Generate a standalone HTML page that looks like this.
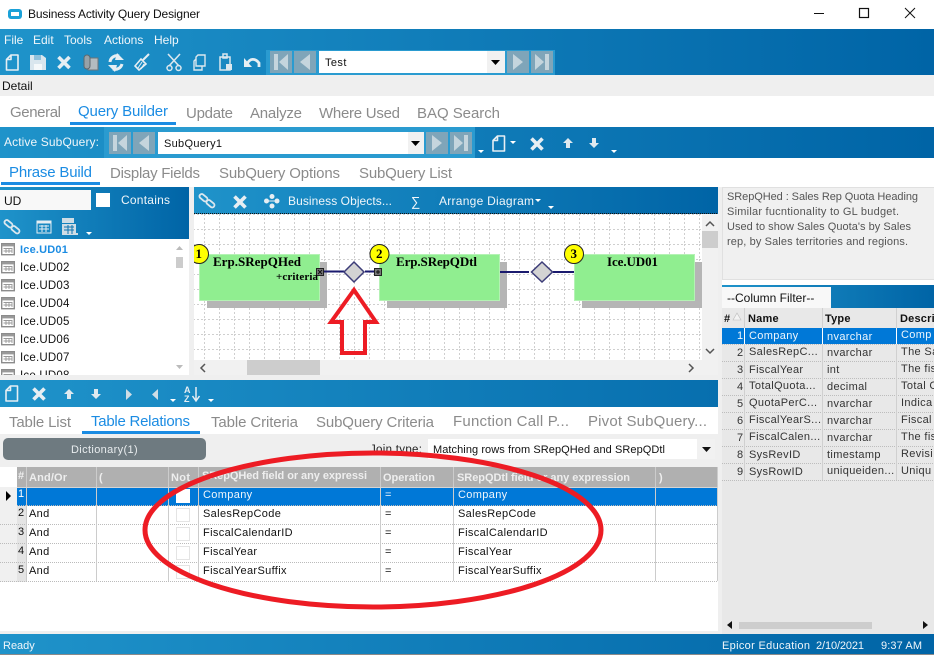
<!DOCTYPE html>
<html><head><meta charset="utf-8"><title>Business Activity Query Designer</title>
<style>
html,body{margin:0;padding:0;background:#fff;width:934px;height:655px;overflow:hidden}
svg{display:block}
text{font-family:"Liberation Sans",sans-serif;font-size:11px;white-space:pre}
.w{fill:#f0f6fa;font-size:12px}
.t{font-size:15px;fill:#8b8b8b}
.a{font-size:15px;fill:#1b8ce3}
.g{font-size:11px;fill:#111;letter-spacing:.35px}
.h{font-size:11px;fill:#eee;font-weight:bold}
.r{font-size:11px;fill:#333;letter-spacing:.35px}
.s{font-family:"Liberation Serif",serif;font-weight:bold;fill:#000;font-size:13px}
</style></head><body>
<svg width="934" height="655" viewBox="0 0 934 655" xmlns="http://www.w3.org/2000/svg">
<defs>
<linearGradient id="b" x1="0" x2="1" y1="0" y2="0"><stop offset="0" stop-color="#1f93ca"/><stop offset="1" stop-color="#0064a6"/></linearGradient>
<linearGradient id="b2" gradientUnits="userSpaceOnUse" x1="0" x2="934" y1="0" y2="0"><stop offset="0" stop-color="#1f93ca"/><stop offset="1" stop-color="#0064a6"/></linearGradient>
<pattern id="dots" x="204" y="229" width="15" height="15" patternUnits="userSpaceOnUse">
<path d="M0 .5H15M.5 0V15" stroke="#cfcfcf" stroke-dasharray="2 2" fill="none"/></pattern>
<clipPath id="cv"><rect x="194" y="214" width="508" height="146"/></clipPath>
<g id="doc"><path d="M5.500 1H12.500V16H1V5.500Z M5.500 1V5.500H1" fill="none" stroke="#e6eef3" stroke-width="1.600" stroke-linejoin="round"/></g>
<g id="x"><path d="M1.500 1.500L12.500 12.500M12.500 1.500L1.500 12.500" stroke="#e6eef3" stroke-width="3.600"/></g>
<g id="lnk" fill="none" stroke="#dbe7ee" stroke-width="1.800"><rect x="0" y="1.500" width="9" height="4.500" rx="2.200" transform="rotate(40 4.500 3.700)"/><rect x="7" y="7.500" width="9" height="4.500" rx="2.200" transform="rotate(40 11.500 9.700)"/></g>
<g id="tbl"><rect x=".7" y=".7" width="12.600" height="11" fill="#fff" stroke="#8c8c8c" stroke-width="1.400"/><rect x="1" y="1" width="12" height="2.400" fill="#999"/><path d="M2.500 5.500h9M2.500 8h9M5 5v5M8 5v5M11 5v5" stroke="#999" stroke-width=".9"/></g>
<g id="l"><rect width="22" height="22" fill="#7fa5b9"/><path d="M6 3V19" stroke="#c5d5dd" stroke-width="4"/><path d="M18 3V19L9 11Z" fill="#c5d5dd"/></g>
<g id="p"><rect width="22" height="22" fill="#7fa5b9"/><path d="M16 3V19L6 11Z" fill="#c5d5dd"/></g>
<g id="n"><rect width="22" height="22" fill="#7fa5b9"/><path d="M6 3V19L16 11Z" fill="#c5d5dd"/></g>
<g id="e"><rect width="22" height="22" fill="#7fa5b9"/><path d="M16 3V19" stroke="#c5d5dd" stroke-width="4"/><path d="M4 3V19L13 11Z" fill="#c5d5dd"/></g>
<path id="sm" d="M0 0H6L3 3Z" fill="#fff"/>
<path id="up" d="M5 0L10 5H7V10H3V5H0Z" fill="#dfe9ef"/>
<path id="dn" d="M3 0H7V5H10L5 10L0 5H3Z" fill="#dfe9ef"/>
</defs>

<rect width="934" height="655" fill="#fff"/>
<!-- title -->
<rect x="8" y="9" width="14" height="10" rx="3" fill="#1ba1d8"/><rect x="11" y="12" width="8" height="4" fill="#fff"/>
<text x="28" y="18" style="font-size:12px" fill="#111" textLength="172">Business Activity Query Designer</text>
<path d="M814 13.500H824" stroke="#111"/><rect x="859.500" y="8.500" width="9" height="9" fill="none" stroke="#111" stroke-width="1.200"/><path d="M905 8L915 18M915 8L905 18" stroke="#111"/>

<!-- menu band -->
<rect y="29" width="934" height="46" fill="url(#b2)"/>
<text class="w" x="4" y="44">File</text><text class="w" x="33" y="44">Edit</text><text class="w" x="64" y="44">Tools</text><text class="w" x="104" y="44">Actions</text><text class="w" x="154" y="44">Help</text>
<rect x="266" y="50" width="289" height="25" fill="#2a9bd0"/>
<use href="#doc" x="5.500" y="54"/>
<path d="M30 55H42L46 58V70H30Z" fill="#d9e6ee"/><rect x="34" y="55" width="7" height="5" fill="#8fc1dc"/><rect x="34" y="64" width="8" height="6" fill="#f4f8fa"/>
<use href="#x" x="57" y="55.500"/>
<rect x="88" y="58" width="10" height="12" fill="#b3bcc0" stroke="#6d7478"/><rect x="84" y="55" width="6" height="14" rx="3" fill="#97a2a8" stroke="#5e686e"/>
<path d="M110 62A7 7 0 0 1 119 56M122 64A7 7 0 0 1 113 69" fill="none" stroke="#e6eef3" stroke-width="3"/><path d="M117 53L124 60L115 60ZM115 72L108 65L117 65Z" fill="#e6eef3"/>
<path d="M149 54L143 60" stroke="#e6eef3" stroke-width="2"/><path d="M135 66L141 59L146 64L139 70Z" fill="none" stroke="#e6eef3" stroke-width="1.600"/><path d="M138 68L142 62M141 69L144 64" stroke="#e6eef3"/>
<path d="M168 54L179 66M180 54L169 66" stroke="#dbe7ee" stroke-width="1.600"/><circle cx="169.500" cy="68" r="2.500" fill="none" stroke="#dbe7ee" stroke-width="1.500"/><circle cx="178.500" cy="68" r="2.500" fill="none" stroke="#dbe7ee" stroke-width="1.500"/>
<path d="M198 55H205V66H196V57ZM196 59L194 61V70H202V66" fill="none" stroke="#dbe7ee" stroke-width="1.400"/>
<path d="M220 57H230V70H220ZM223 54H227V58H223Z" fill="none" stroke="#dbe7ee" stroke-width="1.500"/><rect x="226" y="64" width="6" height="6" fill="#dbe7ee"/>
<path d="M247 64C250 58 255 58 259 63V67" fill="none" stroke="#e6eef3" stroke-width="2.800"/><path d="M244 58V67H252Z" fill="#e6eef3"/>
<use href="#l" x="270" y="51"/><use href="#p" x="294" y="51"/>
<rect x="319" y="51" width="186" height="22" fill="#fff"/><rect x="487" y="51" width="18" height="22" fill="#f1f1f1"/>
<text x="325" y="66" style="font-size:11px" fill="#111" letter-spacing=".4">Test</text><path d="M491 60H500L495.500 65Z" fill="#000"/>
<use href="#n" x="507" y="51"/><use href="#e" x="531" y="51"/>

<!-- detail -->
<rect y="75" width="934" height="21" fill="#efefef"/>
<text x="2" y="90" style="font-size:12px" fill="#111">Detail</text>

<!-- tabs 1 -->
<g>
<text class="t" x="10" y="117" textLength="51">General</text>
<text class="a" x="78" y="116" textLength="90">Query Builder</text>
<text class="t" x="186" y="118" textLength="47">Update</text>
<text class="t" x="250" y="118" textLength="52">Analyze</text>
<text class="t" x="319" y="118" textLength="81">Where Used</text>
<text class="t" x="417" y="118" textLength="83">BAQ Search</text>
</g>
<rect x="70" y="122" width="106" height="3" fill="#1b8ce3"/>

<!-- subquery band -->
<rect y="127" width="934" height="31" fill="url(#b2)"/>
<rect x="104" y="127" width="371" height="31" fill="#2a9bd0"/>
<text class="w" x="4" y="146" textLength="95">Active SubQuery:</text>
<use href="#l" x="109" y="132"/><use href="#p" x="133" y="132"/>
<rect x="158" y="132" width="266" height="22" fill="#fff"/><rect x="408" y="132" width="16" height="22" fill="#f1f1f1"/>
<text x="164" y="147" fill="#111" letter-spacing=".3">SubQuery1</text><path d="M411 141H420L415.500 146Z" fill="#000"/>
<use href="#n" x="426" y="132"/><use href="#e" x="450" y="132"/>
<use href="#sm" x="478" y="150"/>
<use href="#doc" x="492" y="135"/><use href="#sm" x="510" y="141"/>
<use href="#x" x="530" y="137"/><use href="#up" x="563" y="138"/><use href="#dn" x="589" y="138"/><use href="#sm" x="611" y="150"/>

<!-- tabs 2 -->
<text class="a" x="9" y="177" textLength="83">Phrase Build</text>
<text class="t" x="110" y="178" textLength="90">Display Fields</text>
<text class="t" x="219" y="178" textLength="121">SubQuery Options</text>
<text class="t" x="359" y="178" textLength="93">SubQuery List</text>
<rect x="1" y="182" width="99" height="3" fill="#1b8ce3"/>

<!-- left panel -->
<rect y="187" width="189" height="52" fill="url(#b)"/>
<rect y="190" width="91" height="20" fill="#f8f8f8"/>
<text x="4" y="205" style="font-size:12px" fill="#111">UD</text>
<rect x="96" y="193" width="14" height="14" fill="#fff"/>
<text class="w" x="121" y="204" textLength="49">Contains</text>
<use href="#lnk" x="4" y="220"/>
<g transform="translate(37,221)"><rect width="14" height="12" fill="none" stroke="#e6eef3"/><rect x=".5" y=".5" width="13" height="2" fill="#e6eef3"/><path d="M2 5h10M2 8h10M5 4v7M9 4v7" stroke="#e6eef3"/></g>
<g transform="translate(62,218)"><rect x="0" y="0" width="12" height="5" fill="#cfdde5"/><rect y="6" width="14" height="11" fill="#cfdde5"/><path d="M2 9h10M2 12h10M6 7v9M10 7v9" stroke="#0f74ae"/><rect x="13" y="15" width="3" height="2" fill="#cfdde5"/></g>
<use href="#sm" x="86" y="232"/>

<rect y="239" width="189" height="136" fill="#fff"/>
<g><use href="#tbl" x="1" y="243"/><text x="20" y="253" style="font-size:11px;font-weight:bold" fill="#1b8ce3" letter-spacing=".2">Ice.UD01</text>
<use href="#tbl" x="1" y="261"/><text x="20" y="271" style="font-size:11.500px" fill="#111" letter-spacing=".2">Ice.UD02</text>
<use href="#tbl" x="1" y="279"/><text x="20" y="289" style="font-size:11.500px" fill="#111" letter-spacing=".2">Ice.UD03</text>
<use href="#tbl" x="1" y="297"/><text x="20" y="307" style="font-size:11.500px" fill="#111" letter-spacing=".2">Ice.UD04</text>
<use href="#tbl" x="1" y="315"/><text x="20" y="325" style="font-size:11.500px" fill="#111" letter-spacing=".2">Ice.UD05</text>
<use href="#tbl" x="1" y="333"/><text x="20" y="343" style="font-size:11.500px" fill="#111" letter-spacing=".2">Ice.UD06</text>
<use href="#tbl" x="1" y="351"/><text x="20" y="361" style="font-size:11.500px" fill="#111" letter-spacing=".2">Ice.UD07</text>
<svg x="0" y="239" width="172" height="136"><use href="#tbl" x="1" y="130"/><text x="20" y="140" style="font-size:11.500px" fill="#111" letter-spacing=".2">Ice.UD08</text></svg></g>
<path d="M176 250L179.500 246L183 250Z M176 365H183L179.500 369Z" fill="#bbb"/><rect x="176" y="257" width="7" height="11" fill="#ccc"/>
<rect y="375" width="934" height="5" fill="#efefef"/>
<rect x="189" y="187" width="5" height="193" fill="#efefef"/>

<!-- diagram toolbar -->
<rect x="194" y="187" width="524" height="27" fill="url(#b)"/>
<path d="M194 213.500H718" stroke="#111" stroke-dasharray="1 1"/>
<use href="#lnk" x="199" y="194"/><use href="#x" x="233" y="195"/>
<g fill="#e6eef3"><circle cx="266.500" cy="201" r="2.500"/><circle cx="272" cy="196.500" r="2.500"/><circle cx="272" cy="206" r="2.500"/><circle cx="277" cy="201" r="2.500"/><path d="M267 200.500H277V201.500H267Z"/></g>
<text class="w" x="288" y="205" textLength="104">Business Objects...</text>
<text class="w" x="411" y="206" style="font-size:13px">∑</text>
<text class="w" x="439" y="205" textLength="95">Arrange Diagram</text><use href="#sm" x="535" y="199"/>
<use href="#sm" x="548" y="206"/>

<!-- canvas -->
<rect x="194" y="214" width="508" height="146" fill="#fff"/>
<rect x="194" y="214" width="508" height="146" fill="url(#dots)"/>
<rect x="702" y="214" width="16" height="146" fill="#f1f1f1"/>
<path d="M706 226L710 222L714 226M706 349L710 353L714 349" fill="none" stroke="#555" stroke-width="1.500"/>
<rect x="702" y="231" width="16" height="17" fill="#cdcdcd"/>
<rect x="194" y="360" width="524" height="15" fill="#f1f1f1"/>
<rect x="247" y="360" width="73" height="15" fill="#cdcdcd"/>
<path d="M205 364L201 368L205 372M689 364L693 368L689 372" fill="none" stroke="#555" stroke-width="1.500"/>

<rect x="207" y="262" width="120" height="46" fill="#b5b5b5"/>
<rect x="387" y="262" width="120" height="46" fill="#b5b5b5"/>
<rect x="582" y="262" width="120" height="46" fill="#b5b5b5"/>
<rect x="199.500" y="254.500" width="120" height="46" fill="#90ee90" stroke="#b4f2b4"/>
<rect x="379.500" y="254.500" width="120" height="46" fill="#90ee90" stroke="#b4f2b4"/>
<rect x="574.500" y="254.500" width="120" height="46" fill="#90ee90" stroke="#b4f2b4"/>
<path d="M320 271.500H344M365 271.500H379M500 272H529M553 272H574" stroke="#1a1a6e" stroke-width="2"/>
<path d="M354 262L364 272L354 282L344 272Z" fill="#d3d3d3" stroke="#3c3c78" stroke-width="1.500"/>
<path d="M542 262L552.500 272L542 282L531.500 272Z" fill="#d3d3d3" stroke="#3c3c78" stroke-width="1.500"/>
<rect x="316.500" y="268.500" width="7" height="7" fill="#777" stroke="#222"/><path d="M318 270L322 274M322 270L318 274" stroke="#111"/>
<rect x="374.500" y="268.500" width="7" height="7" fill="#777" stroke="#222"/><path d="M376 272H380M378 270V274" stroke="#111"/>
<g clip-path="url(#cv)">
<circle cx="199" cy="254" r="9.500" fill="#ff0" stroke="#222" stroke-width="1"/>
<circle cx="379.500" cy="254" r="9.500" fill="#ff0" stroke="#222" stroke-width="1"/>
<circle cx="574" cy="254" r="9.500" fill="#ff0" stroke="#222" stroke-width="1"/>
<text class="s" x="195.500" y="258">1</text><text class="s" x="376" y="258">2</text><text class="s" x="570.500" y="258">3</text>
</g>
<text class="s" x="213" y="266" textLength="88">Erp.SRepQHed</text>
<text class="s" x="396" y="266" textLength="81">Erp.SRepQDtl</text>
<text class="s" x="607" y="266" textLength="51">Ice.UD01</text>
<text class="s" x="276" y="280" style="font-size:11px" textLength="42">+criteria</text>
<path d="M354 290L376 322H365V353H342V322H331Z" fill="none" stroke="#ed1c24" stroke-width="4"/>

<!-- lower toolbar -->
<rect y="380" width="718" height="27" fill="url(#b2)"/>
<use href="#doc" x="5" y="385"/><use href="#x" x="32" y="387"/><use href="#up" x="64" y="389"/><use href="#dn" x="91" y="389"/>
<path d="M126 389L132 394.500L126 400Z M158 389L152 394.500L158 400Z" fill="#cfdde5"/>
<use href="#sm" x="170" y="399"/>
<text x="184" y="393" style="font-size:9px;font-weight:bold" fill="#e6eef3">A</text><text x="184" y="402" style="font-size:9px;font-weight:bold" fill="#e6eef3">Z</text>
<path d="M196 387V400M192.500 396L196 401L199.500 396" fill="none" stroke="#e6eef3" stroke-width="1.500"/>
<use href="#sm" x="208" y="399"/>

<!-- tabs 3 -->
<text class="t" x="9" y="427" textLength="62">Table List</text>
<text class="a" x="91" y="426" textLength="99">Table Relations</text>
<text class="t" x="211" y="427" textLength="87">Table Criteria</text>
<text class="t" x="316" y="427" textLength="118">SubQuery Criteria</text>
<text class="t" x="453" y="426" textLength="116">Function Call P...</text>
<text class="t" x="588" y="426" textLength="119">Pivot SubQuery...</text>
<rect x="82" y="431" width="118" height="3" fill="#1b8ce3"/>

<rect y="434" width="718" height="33" fill="#efefef"/>
<rect x="3" y="438" width="203" height="22" rx="5" fill="#6e7a80"/>
<text x="71" y="453" fill="#e8ecee" letter-spacing=".3" textLength="67">Dictionary(1)</text>
<text x="370" y="453" style="font-size:11.500px" fill="#222" letter-spacing=".3">Join type:</text>
<rect x="428" y="439" width="287" height="20" fill="#fff"/><rect x="697" y="439" width="18" height="20" fill="#f1f1f1"/>
<text x="433" y="453" style="font-size:11px" fill="#111" textLength="232">Matching rows from SRepQHed and SRepQDtl</text>
<path d="M702 447H711L706.500 452Z" fill="#111"/>

<!-- grid -->
<rect y="467" width="718" height="167" fill="#fff"/>
<rect y="631" width="718" height="3" fill="#efefef"/>
<rect x="17" y="467" width="701" height="20" fill="#b0b0b0"/>
<rect x="0" y="487" width="17" height="95" fill="#f0f0f0"/>
<rect x="17" y="487" width="9" height="95" fill="#e4e4e4"/>
<rect x="0" y="487" width="718" height="19" fill="#0078d7"/><rect x="0" y="487" width="17" height="19" fill="#f0f0f0"/>
<path d="M6 491V501L11 496Z" fill="#000"/>
<g stroke="#bbb" stroke-dasharray="1 1"><path d="M17 505.500H718M0 524.500H718M0 543.500H718M0 562.500H718M0 581.500H718"/></g>
<g stroke="#ccc"><path d="M26.500 467V581M96.500 467V581M168.500 467V581M198.500 467V581M380.500 467V581M453.500 467V581M655.500 467V581M717.500 467V581"/></g>
<path d="M17 487.500H718" stroke="#d5d5d5"/>
<text class="h" x="18" y="479">#</text><text class="h" x="29" y="481" textLength="38">And/Or</text><text class="h" x="99" y="481">(</text><text class="h" x="171" y="481" textLength="19">Not</text>
<text class="h" x="202" y="479" textLength="165">SRepQHed field or any expressi</text>
<text class="h" x="383" y="481" textLength="52">Operation</text><text class="h" x="457" y="481" textLength="173">SRepQDtl field or any expression</text><text class="h" x="659" y="481">)</text>
<rect x="176" y="489" width="14" height="14" fill="#fff"/>
<g fill="#fff" stroke="#e4e4e4"><rect x="176.500" y="508.500" width="13" height="13"/><rect x="176.500" y="527.500" width="13" height="13"/><rect x="176.500" y="546.500" width="13" height="13"/><rect x="176.500" y="565.500" width="13" height="13"/></g>
<text class="g" x="18" y="497" style="fill:#fff">1</text>
<text class="g" x="203" y="498" style="fill:#f0f6fb">Company</text><text class="g" x="385" y="498" style="fill:#f0f6fb">=</text><text class="g" x="458" y="498" style="fill:#f0f6fb">Company</text>
<text class="g" x="18" y="516">2</text><text class="g" x="29" y="517">And</text><text class="g" x="203" y="517">SalesRepCode</text><text class="g" x="385" y="517">=</text><text class="g" x="458" y="517">SalesRepCode</text>
<text class="g" x="18" y="535">3</text><text class="g" x="29" y="536">And</text><text class="g" x="203" y="536">FiscalCalendarID</text><text class="g" x="385" y="536">=</text><text class="g" x="458" y="536">FiscalCalendarID</text>
<text class="g" x="18" y="554">4</text><text class="g" x="29" y="555">And</text><text class="g" x="203" y="555">FiscalYear</text><text class="g" x="385" y="555">=</text><text class="g" x="458" y="555">FiscalYear</text>
<text class="g" x="18" y="573">5</text><text class="g" x="29" y="574">And</text><text class="g" x="203" y="574">FiscalYearSuffix</text><text class="g" x="385" y="574">=</text><text class="g" x="458" y="574">FiscalYearSuffix</text>

<!-- right -->
<rect x="718" y="187" width="4" height="447" fill="#efefef"/>
<rect x="722.500" y="187.500" width="212" height="92" fill="#f0f0f0" stroke="#e0e0e0"/>
<text x="727" y="200" fill="#555" textLength="191">SRepQHed : Sales Rep Quota Heading</text>
<text x="727" y="215" fill="#555" textLength="172">Similar fucntionality to GL budget.</text>
<text x="727" y="230" fill="#555" textLength="184">Used to show Sales Quota's by Sales</text>
<text x="727" y="245" fill="#555" textLength="181">rep, by Sales territories and regions.</text>
<rect x="722" y="280" width="212" height="5" fill="#fff"/>
<rect x="722" y="285" width="212" height="23" fill="url(#b)"/>
<rect x="722" y="287" width="109" height="21" fill="#f8f8f8"/>
<text x="727" y="302" style="font-size:12px" fill="#111">--Column Filter--</text>
<rect x="722" y="308" width="212" height="326" fill="#e8e8e8"/>
<g><text x="724" y="322" style="font-weight:bold" fill="#111">#</text><text x="748" y="322" style="font-weight:bold" fill="#111" letter-spacing=".2">Name</text><text x="825" y="322" style="font-weight:bold" fill="#111" letter-spacing=".2">Type</text><text x="900" y="322" style="font-weight:bold" fill="#111" letter-spacing=".2">Descri</text></g>
<path d="M733 320L737 313L741 320Z" fill="#f3f3f3" stroke="#bbb" stroke-width=".6"/>
<rect x="722" y="328" width="212" height="16" fill="#0078d7"/>
<g stroke="#bdbdbd" stroke-dasharray="1 1"><path d="M722 344.500H934M722 361.500H934M722 378.500H934M722 395.500H934M722 412.500H934M722 429.500H934M722 446.500H934M722 463.500H934M722 480.500H934"/></g>
<g stroke="#d0d0d0"><path d="M744.500 308V480M822.500 308V480M896.500 308V480"/></g>
<g fill="#fff"><rect x="744" y="328" width="1" height="16"/><rect x="822" y="328" width="1" height="16"/><rect x="896" y="328" width="1" height="16"/></g>
<text class="r" x="737" y="339" style="fill:#eef6fc">1</text><text class="r" x="749" y="339" style="fill:#eef6fc">Company</text><text class="r" x="827" y="340" style="fill:#eef6fc">nvarchar</text><text class="r" x="901" y="338" style="fill:#eef6fc">Comp</text>
<text class="r" x="737" y="356">2</text><text class="r" x="749" y="355">SalesRepC...</text><text class="r" x="827" y="356">nvarchar</text><text class="r" x="901" y="355">The Sa</text>
<text class="r" x="737" y="373">3</text><text class="r" x="749" y="373">FiscalYear</text><text class="r" x="827" y="373">int</text><text class="r" x="901" y="372">The fis</text>
<text class="r" x="737" y="390">4</text><text class="r" x="749" y="389">TotalQuota...</text><text class="r" x="827" y="390">decimal</text><text class="r" x="901" y="389">Total C</text>
<text class="r" x="737" y="407">5</text><text class="r" x="749" y="406">QuotaPerC...</text><text class="r" x="827" y="407">nvarchar</text><text class="r" x="901" y="406">Indica</text>
<text class="r" x="737" y="424">6</text><text class="r" x="749" y="423">FiscalYearS...</text><text class="r" x="827" y="424">nvarchar</text><text class="r" x="901" y="423">Fiscal</text>
<text class="r" x="737" y="441">7</text><text class="r" x="749" y="440">FiscalCalen...</text><text class="r" x="827" y="441">nvarchar</text><text class="r" x="901" y="440">The fis</text>
<text class="r" x="737" y="458">8</text><text class="r" x="749" y="458">SysRevID</text><text class="r" x="827" y="458">timestamp</text><text class="r" x="901" y="457">Revisi</text>
<text class="r" x="737" y="475">9</text><text class="r" x="749" y="475">SysRowID</text><text class="r" x="827" y="474">uniqueiden...</text><text class="r" x="901" y="474">Uniqu</text>
<path d="M732 621V629L727 625Z M923 621V629L928 625Z" fill="#111"/><rect x="739" y="622" width="133" height="7" fill="#cdcdcd"/>

<!-- status -->
<rect y="634" width="934" height="20" fill="url(#b2)"/><rect y="654" width="934" height="1" fill="#8a8a8a"/>
<text class="w" x="3" y="649" style="font-size:11px">Ready</text>
<text class="w" x="722" y="649" style="font-size:11px" textLength="88">Epicor Education</text>
<text class="w" x="816" y="649" style="font-size:11px" textLength="48">2/10/2021</text>
<text class="w" x="881" y="649" style="font-size:11px" textLength="41">9:37 AM</text>

<!-- annotation ellipse -->
<ellipse cx="373" cy="530" rx="228" ry="77" fill="none" stroke="#ed1c24" stroke-width="5"/>
</svg>
</body></html>
